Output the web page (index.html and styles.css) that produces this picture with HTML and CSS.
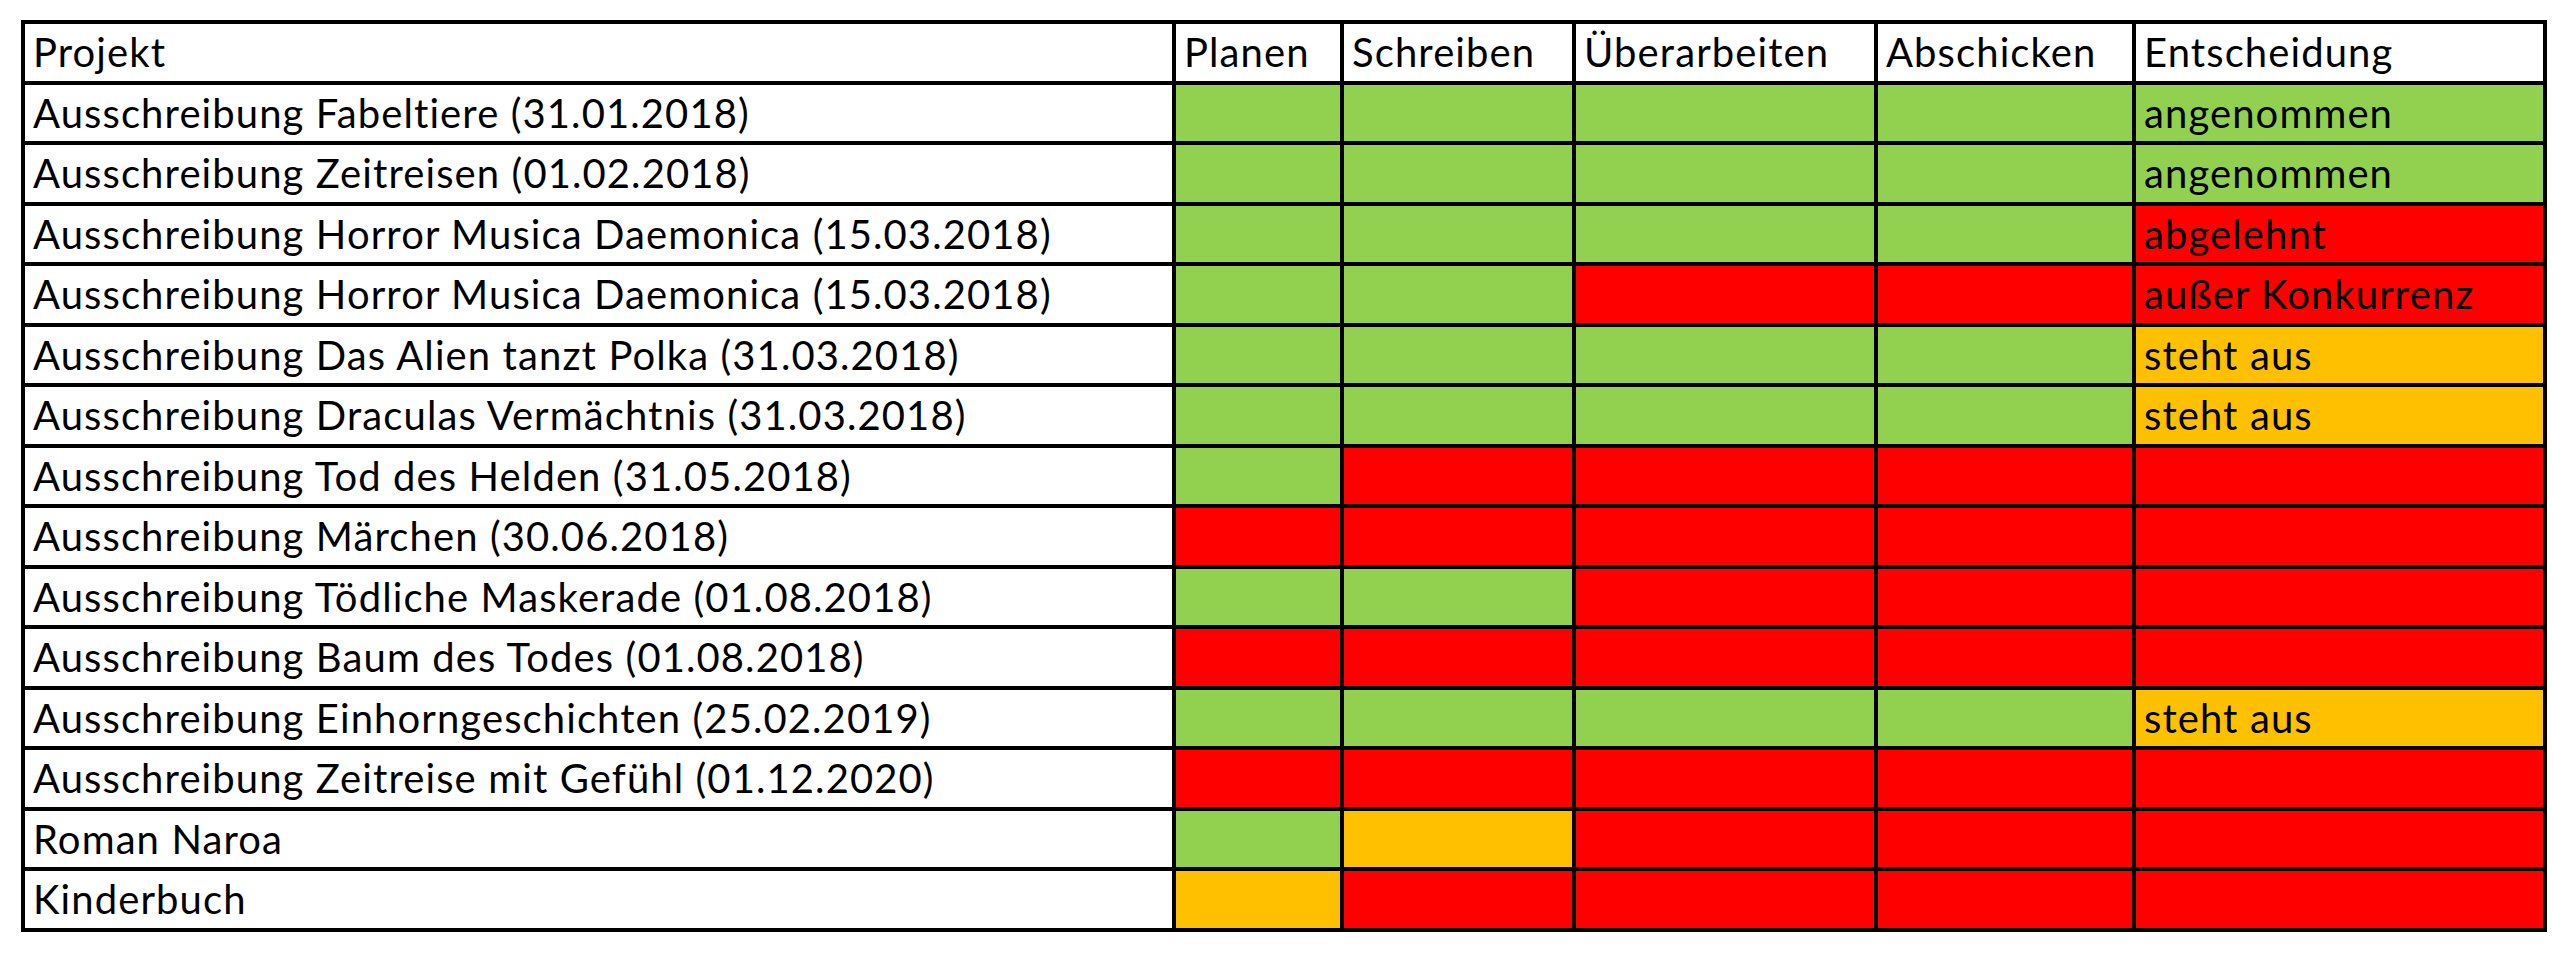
FILE: index.html
```html
<!DOCTYPE html>
<html lang="de">
<head>
<meta charset="utf-8">
<title>Projekte</title>
<link rel="stylesheet" href="styles.css">
</head>
<body>
<div class="sheet" role="table">
  <div class="cell head">Projekt</div>
  <div class="cell head">Planen</div>
  <div class="cell head">Schreiben</div>
  <div class="cell head">Überarbeiten</div>
  <div class="cell head">Abschicken</div>
  <div class="cell head">Entscheidung</div>

  <div class="cell name">Ausschreibung Fabeltiere (31.01.2018)</div>
  <div class="cell g"></div><div class="cell g"></div><div class="cell g"></div><div class="cell g"></div>
  <div class="cell g">angenommen</div>

  <div class="cell name">Ausschreibung Zeitreisen (01.02.2018)</div>
  <div class="cell g"></div><div class="cell g"></div><div class="cell g"></div><div class="cell g"></div>
  <div class="cell g">angenommen</div>

  <div class="cell name">Ausschreibung Horror Musica Daemonica (15.03.2018)</div>
  <div class="cell g"></div><div class="cell g"></div><div class="cell g"></div><div class="cell g"></div>
  <div class="cell r">abgelehnt</div>

  <div class="cell name">Ausschreibung Horror Musica Daemonica (15.03.2018)</div>
  <div class="cell g"></div><div class="cell g"></div><div class="cell r"></div><div class="cell r"></div>
  <div class="cell r">außer Konkurrenz</div>

  <div class="cell name">Ausschreibung Das Alien tanzt Polka (31.03.2018)</div>
  <div class="cell g"></div><div class="cell g"></div><div class="cell g"></div><div class="cell g"></div>
  <div class="cell o">steht aus</div>

  <div class="cell name">Ausschreibung Draculas Vermächtnis (31.03.2018)</div>
  <div class="cell g"></div><div class="cell g"></div><div class="cell g"></div><div class="cell g"></div>
  <div class="cell o">steht aus</div>

  <div class="cell name">Ausschreibung Tod des Helden (31.05.2018)</div>
  <div class="cell g"></div><div class="cell r"></div><div class="cell r"></div><div class="cell r"></div>
  <div class="cell r"></div>

  <div class="cell name">Ausschreibung Märchen (30.06.2018)</div>
  <div class="cell r"></div><div class="cell r"></div><div class="cell r"></div><div class="cell r"></div>
  <div class="cell r"></div>

  <div class="cell name">Ausschreibung Tödliche Maskerade (01.08.2018)</div>
  <div class="cell g"></div><div class="cell g"></div><div class="cell r"></div><div class="cell r"></div>
  <div class="cell r"></div>

  <div class="cell name">Ausschreibung Baum des Todes (01.08.2018)</div>
  <div class="cell r"></div><div class="cell r"></div><div class="cell r"></div><div class="cell r"></div>
  <div class="cell r"></div>

  <div class="cell name">Ausschreibung Einhorngeschichten (25.02.2019)</div>
  <div class="cell g"></div><div class="cell g"></div><div class="cell g"></div><div class="cell g"></div>
  <div class="cell o">steht aus</div>

  <div class="cell name">Ausschreibung Zeitreise mit Gefühl (01.12.2020)</div>
  <div class="cell r"></div><div class="cell r"></div><div class="cell r"></div><div class="cell r"></div>
  <div class="cell r"></div>

  <div class="cell name">Roman Naroa</div>
  <div class="cell g"></div><div class="cell o"></div><div class="cell r"></div><div class="cell r"></div>
  <div class="cell r"></div>

  <div class="cell name">Kinderbuch</div>
  <div class="cell o"></div><div class="cell r"></div><div class="cell r"></div><div class="cell r"></div>
  <div class="cell r"></div>
</div>
</body>
</html>
```
FILE: styles.css
```css
html, body {
  background: #ffffff;
}
body {
  margin: 0;
  padding: 20px 0 0 21px;
  font-family: Lato, "Open Sans", "Liberation Sans", sans-serif;
  color: #000000;
}
.sheet {
  display: grid;
  grid-template-columns: 1147px 164px 228px 298px 254px 407px;
  grid-auto-rows: 56.53px;
  gap: 4px;
  padding: 4px;
  background: #000000;
  width: max-content;
}
.cell {
  background: #ffffff;
  font-size: 40px;
  letter-spacing: 1.1px;
  line-height: 1.2;
  padding: 4px 0 0 8px;
  white-space: nowrap;
  overflow: hidden;
}
.g { background: #92d050; }
.r { background: #ff0000; }
.o { background: #ffc000; }
```
